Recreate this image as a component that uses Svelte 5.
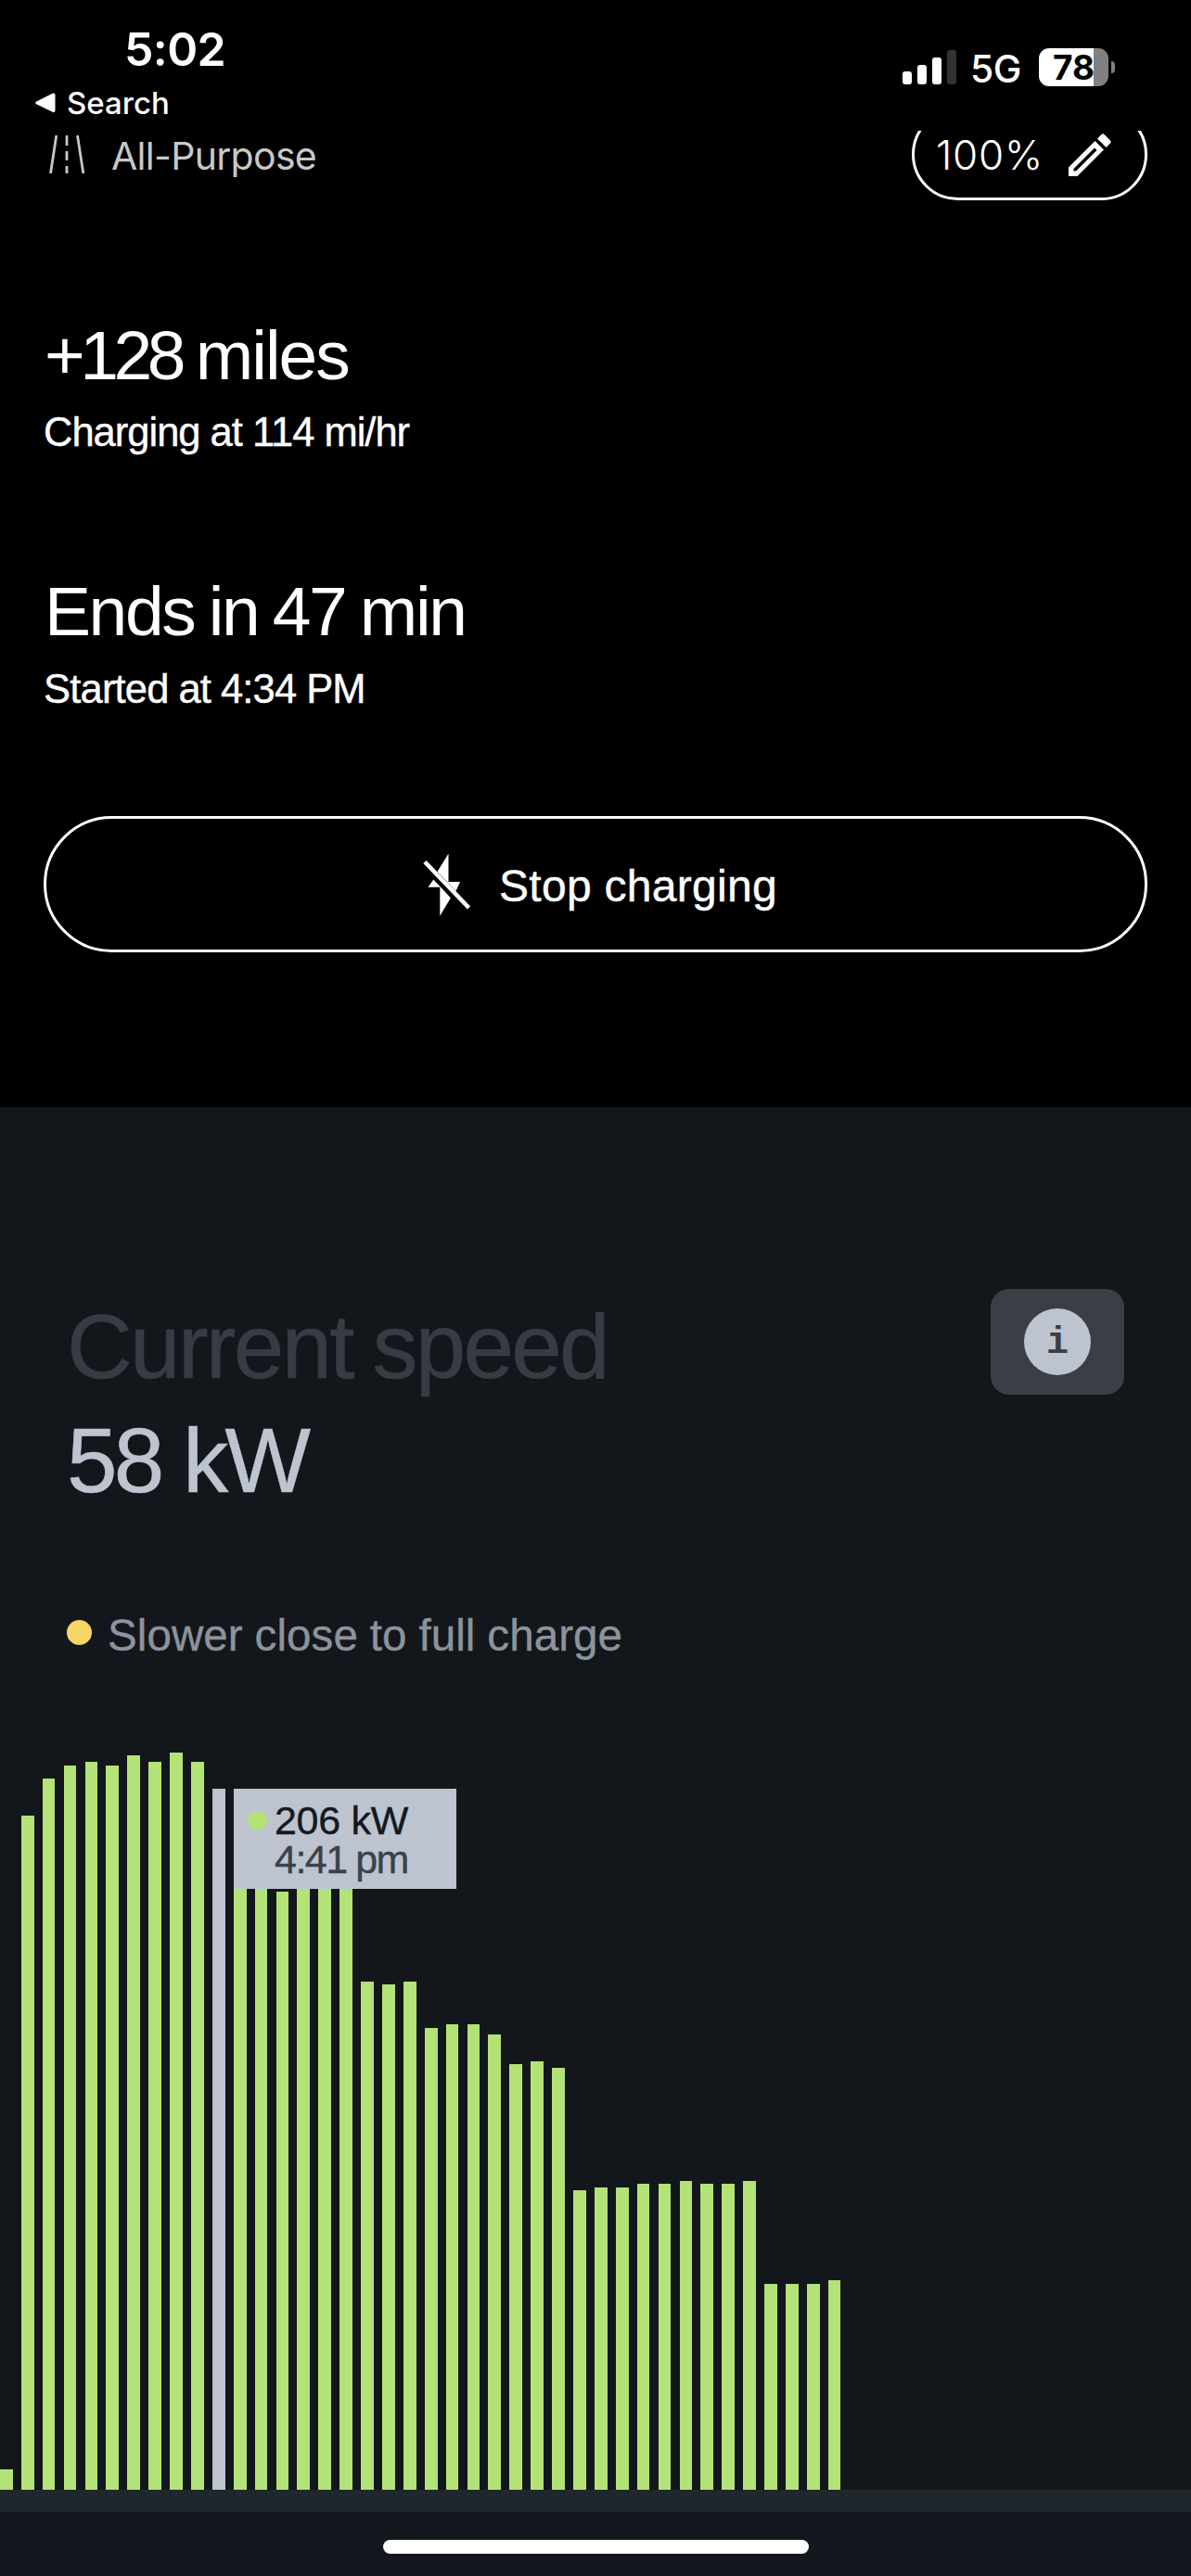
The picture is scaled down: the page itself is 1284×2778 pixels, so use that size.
<script lang="ts">
  // bar heights in px, oldest sample first
  const bars = [
    22, 727, 767, 781, 785, 781, 792, 785, 795, 785,
    756, 740, 700, 645, 690, 690, 680, 548, 545, 548,
    498, 502, 502, 491, 459, 462, 455, 323, 326, 326,
    330, 330, 333, 330, 330, 333, 222, 222, 222, 226
  ];
  const selected = 10;
  const signal = [14, 21, 29, 37];
</script>

<div class="screen">
  <header class="status">
    <div class="status-left">
      <span class="time">5:02</span>
      <span class="back">
        <svg width="22" height="22" viewBox="0 0 22 22"><path d="M1.2 9.4 18.6.8Q21.500-.4 21.500 2.500V19Q21.500 22 18.600 20.800L1.200 12.300Q-.8 10.900 1.200 9.400Z" fill="#fff" /></svg>
        Search
      </span>
    </div>
    <div class="status-right">
      <div class="signal">
        {#each signal as h, i}
          <i class:off={i === 3} style="height: {h}px"></i>
        {/each}
      </div>
      <span class="network">5G</span>
      <div class="battery"><span>78</span></div>
      <i class="nub"></i>
    </div>
  </header>

  <div class="mode-row">
    <div class="mode">
      <svg width="38" height="41" viewBox="0 0 38 41" fill="none" stroke="#c8c8c8" stroke-width="2.800">
        <path d="M7.800 0 1.500 41M30.500 0 36.800 41M19 0v11M19 17v10M19 33v8" />
      </svg>
      <span>All-Purpose</span>
    </div>
    <div class="limit">
      <span>100%</span>
      <svg width="46" height="46" viewBox="0 0 46 46">
        <path d="M0 36.500 28.500 8 38 17.500 9.500 46H0Z" fill="#fff" />
        <path d="M5.500 40.500v-2.500L28 15.500 30.500 18 8 40.500Z" fill="#000" />
        <path d="M31 5.500 35.500 1Q37-.3 38.500 1L45 7.500Q46.200 9 45 10.500L40.500 15Z" fill="#fff" />
      </svg>
    </div>
  </div>

  <section class="stats">
    <h2 class="miles"><span class="amount">+128</span> miles</h2>
    <p class="rate">Charging at 114 mi/hr</p>
    <h2 class="ends">Ends in 47 min</h2>
    <p class="started">Started at 4:34 PM</p>
    <button>
      <svg width="52" height="68" viewBox="0 0 52 68">
        <path d="M27.500 .5V31H40L35.500 41 15.500 20Z" fill="#fff" />
        <path d="M11.300 28.500 29.900 48.300 18.300 67.800V36.700H5.500Z" fill="#fff" />
        <path d="M2 9.500 49.500 59" stroke="#fff" stroke-width="4.600" />
      </svg>
      <span>Stop charging</span>
    </button>
  </section>

  <section class="speed">
    <div class="speed-head">
      <div class="titles">
        <h1>Current speed</h1>
        <h1 class="value">58 kW</h1>
      </div>
      <div class="info"><span>i</span></div>
    </div>
    <p class="note"><i class="dot"></i>Slower close to full charge</p>

    <div class="chart">
      {#each bars as h, i}
        <div class="bar" class:selected={i === selected} style="height: {h}px"></div>
      {/each}
      <div class="tooltip">
        <i class="dot"></i>
        <div>
          <div class="kw">206 kW</div>
          <div class="at">4:41 pm</div>
        </div>
      </div>
    </div>
    <div class="axis"></div>
    <footer><div class="home"></div></footer>
  </section>
</div>

<style>
  :global(body) {
    background: #000;
  }

  .screen {
    width: 1284px;
    height: 2778px;
    overflow: hidden;
    background: #000;
    color: #fff;
    font-family: "Liberation Sans", Arial, sans-serif;
    white-space: nowrap;
    display: flex;
    flex-direction: column;
  }

  h1,
  h2,
  p {
    margin: 0;
    font-weight: 400;
  }

  i {
    display: block;
    flex: none;
  }

  .status {
    height: 141px;
    display: flex;
    justify-content: space-between;
    font-family: Inter, sans-serif;
  }

  .status-left {
    padding: 23px 0 0 38px;
    display: flex;
    flex-direction: column;
    gap: 8px;
  }

  .time {
    padding-left: 96px;
    font-size: 50px;
    line-height: 60px;
    font-weight: 600;
    letter-spacing: -0.6px;
  }

  .back {
    display: flex;
    align-items: center;
    gap: 12px;
    font-size: 33px;
    line-height: 40px;
    font-weight: 500;
  }

  .status-right {
    height: 41px;
    margin: 52px 82px 0 0;
    display: flex;
    align-items: center;
  }

  .signal {
    display: flex;
    align-items: flex-end;
    gap: 6px;
    height: 37px;
  }

  .signal i {
    width: 10px;
    border-radius: 3px;
    background: #fff;
  }

  .signal .off {
    background: #333;
  }

  .network {
    width: 74px;
    margin-left: 15px;
    padding-top: 4px;
    font-size: 41px;
    line-height: 41px;
    font-weight: 450;
    letter-spacing: -0.5px;
  }

  .battery {
    width: 75px;
    height: 41px;
    border-radius: 11px;
    background: linear-gradient(90deg, #fff 59px, #808080 59px);
    color: #000;
    font-size: 37px;
    line-height: 41px;
    font-weight: 700;
    text-align: center;
  }

  .nub {
    width: 4px;
    height: 13px;
    margin-left: 3px;
    border-radius: 0 5px 5px 0;
    background: #808080;
  }

  .mode-row {
    height: 75px;
    overflow: hidden;
    display: flex;
    justify-content: space-between;
    padding: 0 47px 0 53px;
    font-family: Inter, sans-serif;
  }

  .mode {
    display: flex;
    align-items: flex-start;
    gap: 29px;
    padding-top: 2px;
    color: #c8c8c8;
    font-size: 41px;
    line-height: 50px;
    letter-spacing: -0.7px;
  }

  .mode svg {
    margin-top: 3px;
  }

  .limit {
    box-sizing: border-box;
    width: 254px;
    height: 99px;
    margin-top: -24px;
    padding-left: 23px;
    border: 3px solid #fff;
    border-radius: 50px;
    display: flex;
    align-items: center;
    font-size: 44px;
    font-weight: 350;
    letter-spacing: 0.8px;
  }

  .limit span {
    width: 143px;
  }

  .stats {
    box-sizing: border-box;
    height: 978px;
    padding: 122px 47px 0;
  }

  h2 {
    font-size: 75px;
    line-height: 90px;
    margin-bottom: 11px;
  }

  .miles {
    padding-left: 1px;
    letter-spacing: -2px;
    word-spacing: -3px;
  }

  .amount {
    letter-spacing: -5.500px;
  }

  .ends {
    padding-left: 1px;
    letter-spacing: -2.400px;
    word-spacing: -3px;
  }

  .stats p {
    font-size: 43.500px;
    line-height: 54px;
    -webkit-text-stroke: 0.4px #fff;
  }

  .rate {
    letter-spacing: -1px;
    margin-bottom: 121px;
  }

  .stats .started {
    padding-top: 1px;
    letter-spacing: -0.800px;
    word-spacing: -0.5px;
    margin-bottom: 110px;
  }

  button {
    box-sizing: border-box;
    width: 1190px;
    height: 147px;
    padding: 0 0 0 10px;
    display: flex;
    align-items: center;
    justify-content: center;
    gap: 30px;
    background: none;
    border: 3px solid #fff;
    border-radius: 74px;
    color: #fff;
    font: 48px "Liberation Sans", Arial, sans-serif;
    letter-spacing: 0.3px;
    -webkit-text-stroke: 0.4px #fff;
  }

  button span {
    padding-top: 4px;
  }

  .speed {
    flex: 1;
    padding-top: 196px;
    background: #13171b;
    display: flex;
    flex-direction: column;
  }

  .speed-head {
    display: flex;
    justify-content: space-between;
    align-items: flex-start;
    padding: 0 72px 0 72px;
  }

  .titles {
    padding-top: 1px;
  }

  h1 {
    font-size: 98px;
    line-height: 123px;
    letter-spacing: -2.700px;
    word-spacing: -3px;
    color: #363c44;
    -webkit-text-stroke: 0.6px currentColor;
  }

  .value {
    letter-spacing: -3.700px;
    word-spacing: 0;
    color: #bdc4cf;
  }

  .info {
    width: 144px;
    height: 114px;
    border-radius: 20px;
    background: #3b3e45;
    display: flex;
    align-items: center;
    justify-content: center;
  }

  .info span {
    box-sizing: border-box;
    width: 72px;
    height: 72px;
    padding-top: 2px;
    border-radius: 50%;
    background: #bdc4cf;
    color: #3b3e45;
    font: bold 40px/72px "Liberation Mono", monospace;
    text-align: center;
  }

  .note {
    display: flex;
    align-items: center;
    gap: 17px;
    margin-top: 100px;
    padding-left: 72px;
    font-size: 47.500px;
    line-height: 54px;
    letter-spacing: 0.1px;
    word-spacing: -0.5px;
    color: #8d939c;
    -webkit-text-stroke: 0.4px currentColor;
  }

  .note .dot {
    width: 27px;
    height: 27px;
    margin-top: -7px;
    border-radius: 50%;
    background: #f6d766;
  }

  .chart {
    position: relative;
    flex: 1;
    display: flex;
    align-items: flex-end;
    gap: 9.1875px;
  }

  .bar {
    flex: none;
    width: 13.703125px;
    background: #b3e376;
  }

  .bar.selected {
    background: #bdc4cf;
  }

  .tooltip {
    position: absolute;
    left: 252px;
    bottom: 648px;
    box-sizing: border-box;
    width: 240px;
    height: 108px;
    padding: 13px 0 0 15px;
    display: flex;
    gap: 8px;
    background: #bdc4cf;
    font-size: 43px;
    line-height: 42px;
  }

  .tooltip .dot {
    width: 21px;
    height: 21px;
    margin-top: 11px;
    border-radius: 50%;
    background: #b3e376;
  }

  .kw {
    color: #14181f;
    letter-spacing: -0.3px;
    -webkit-text-stroke: 0.4px currentColor;
  }

  .at {
    color: #3b414a;
    letter-spacing: -1.500px;
    word-spacing: -1px;
    -webkit-text-stroke: 0.4px currentColor;
  }

  .axis {
    height: 24px;
    background: #1f262c;
  }

  footer {
    height: 69px;
    background: #14171d;
    display: flex;
    justify-content: center;
    align-items: flex-start;
  }

  .home {
    width: 459px;
    height: 15px;
    margin-top: 30px;
    border-radius: 8px;
    background: #fff;
  }
</style>
